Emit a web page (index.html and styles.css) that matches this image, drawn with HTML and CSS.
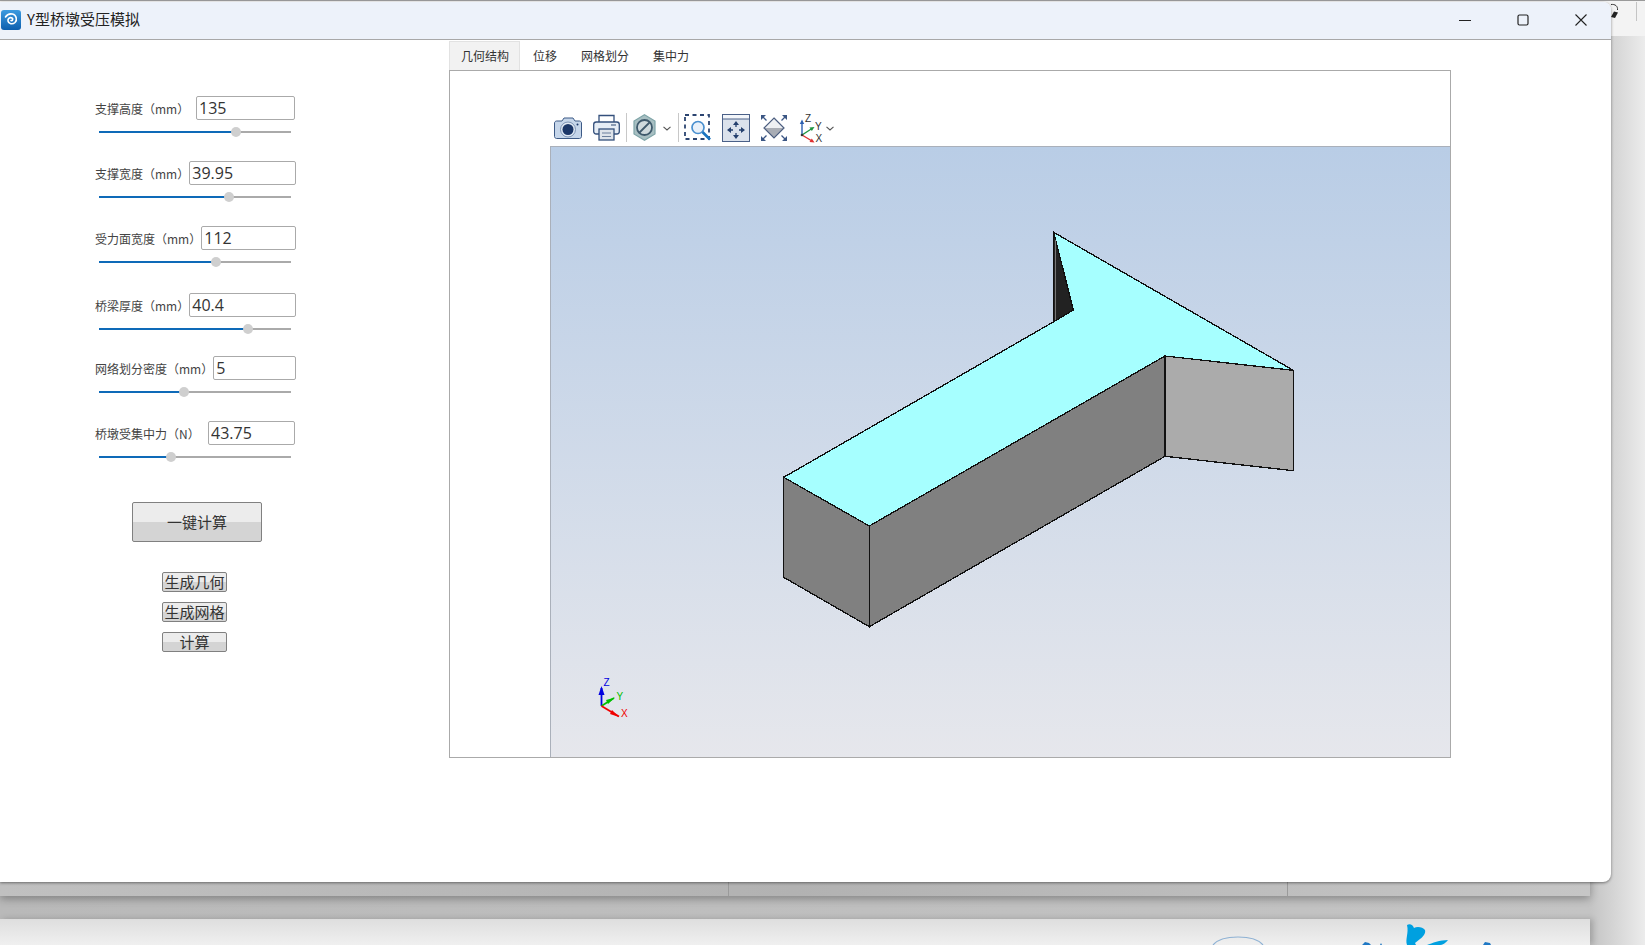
FILE: index.html
```html
<!DOCTYPE html>
<html lang="zh">
<head>
<meta charset="utf-8">
<title>Y型桥墩受压模拟</title>
<link rel="stylesheet" href="styles.css">
</head>
<body>
<div class="desktop">
  <div class="back-top"><span class="back-tick"></span></div>
  <svg class="back-cursor" width="10" height="16" viewBox="0 0 10 16"><path d="M1 1.500C5 1 8 3 7.500 7" fill="none" stroke="#333" stroke-width="1"/><path d="M4 8.500L8 9.500L5 15L1 14Z" fill="#222"/></svg>
  <div class="back-strip"><span class="div-a"></span><span class="div-b"></span></div>
  <div class="back-doc">
    <svg class="doc-logo" width="300" height="26" viewBox="0 0 300 26">
      <path d="M1 26C6 20 15 18 26 18C37 18 46 20 51 26" fill="none" stroke="#8fb2d4" stroke-width="1.200"/>
      <path d="M195 6C198 4 201 6 202 9C205 7 211 8 213 11C214 14 211 18 208 20L203 24L204 26H195C193 20 197 14 195 6Z" fill="#00a0e0"/>
      <path d="M215 26C220 24 228 21 236 21C234 24 230 26 228 26Z" fill="#00a0e0"/>
      <path d="M150 26L153 23L157 24L159 26Z M168 26L169 24L170 26Z M271 26L273 23L278 24L279 26Z" fill="#1f78c4"/>
    </svg>
  </div>

  <div class="window">
    <header class="titlebar">
      <svg class="app-icon" width="20" height="20" viewBox="0 0 20 20">
        <defs><linearGradient id="appg" x1="0" y1="0" x2="0" y2="1"><stop offset="0" stop-color="#3c9be0"/><stop offset="1" stop-color="#0d5fae"/></linearGradient></defs>
        <rect width="20" height="20" rx="3" fill="url(#appg)"/>
        <path d="M10 10.500C11.500 11 12.500 9 11 8C9 6.800 6.500 8.500 7 11C7.500 13.800 11.500 14.800 14 12.500C16.500 10 15.500 5 11.500 4C9 3.500 6 4.500 4.500 7" fill="none" stroke="#fff" stroke-width="1.600" stroke-linecap="round"/>
      </svg>
      <span class="title-text">Y型桥墩受压模拟</span>
      <div class="win-controls">
        <svg width="12" height="12" viewBox="0 0 12 12"><path d="M0 6.500H12" stroke="#222" stroke-width="1"/></svg>
        <svg width="12" height="12" viewBox="0 0 12 12"><rect x="1" y="1" width="10" height="10" rx="1.500" fill="none" stroke="#222" stroke-width="1.200"/></svg>
        <svg width="12" height="12" viewBox="0 0 12 12"><path d="M0.500 0.500L11.500 11.500M11.500 0.500L0.500 11.500" stroke="#222" stroke-width="1.100"/></svg>
      </div>
    </header>

    <div class="content">
      <aside class="sidebar">
        <div class="field">
          <div class="field-head"><label class="field-label">支撑高度（mm）</label><input class="num w99" value="135"></div>
          <div class="track"><div class="fill" style="width:137px"><span class="thumb"></span></div></div>
        </div>
        <div class="field">
          <div class="field-head"><label class="field-label">支撑宽度（mm）</label><input class="num w107" value="39.95"></div>
          <div class="track"><div class="fill" style="width:130px"><span class="thumb"></span></div></div>
        </div>
        <div class="field field-tall">
          <div class="field-head"><label class="field-label">受力面宽度（mm）</label><input class="num w95" value="112"></div>
          <div class="track"><div class="fill" style="width:117px"><span class="thumb"></span></div></div>
        </div>
        <div class="field field-short">
          <div class="field-head"><label class="field-label">桥梁厚度（mm）</label><input class="num w107" value="40.4"></div>
          <div class="track"><div class="fill" style="width:149px"><span class="thumb"></span></div></div>
        </div>
        <div class="field">
          <div class="field-head"><label class="field-label">网络划分密度（mm）</label><input class="num w83" value="5"></div>
          <div class="track"><div class="fill" style="width:85px"><span class="thumb"></span></div></div>
        </div>
        <div class="field">
          <div class="field-head"><label class="field-label">桥墩受集中力（N）</label><input class="num w87" value="43.75"></div>
          <div class="track"><div class="fill" style="width:72px"><span class="thumb"></span></div></div>
        </div>
        <button class="btn btn-main">一键计算</button>
        <div class="small-btns">
          <button class="btn btn-small">生成几何</button>
          <button class="btn btn-small">生成网格</button>
          <button class="btn btn-small">计算</button>
        </div>
      </aside>

      <main class="main">
        <nav class="tabs">
          <span class="tab tab-active">几何结构</span>
          <span class="tab">位移</span>
          <span class="tab">网格划分</span>
          <span class="tab">集中力</span>
        </nav>
        <section class="panel">
          <div class="toolbar">
            <svg class="ti-camera" width="28" height="22" viewBox="0 0 28 22">
              <path d="M2.500 4H8L10 1H19L21 4H25.500C26.500 4 27.500 5 27.500 6V19.500C27.500 20.500 26.500 21.500 25.500 21.500H2.500C1.500 21.500 .5 20.500 .5 19.500V6C.5 5 1.500 4 2.500 4Z" fill="#c6d6ea" stroke="#3d5a86" stroke-width="1"/>
              <circle cx="14" cy="12.500" r="7.500" fill="#dfe8f3" stroke="#7d93b4" stroke-width="1"/>
              <circle cx="14" cy="12.500" r="5.500" fill="#1c3768"/>
              <circle cx="23.500" cy="7.500" r="1" fill="#1c3768"/>
            </svg>
            <svg class="ti-printer" width="27" height="27" viewBox="0 0 27 27">
              <path d="M6 9V1.500H21V9" fill="#fff" stroke="#34507c" stroke-width="1.300"/>
              <rect x=".7" y="8" width="25.600" height="12" rx="2.500" fill="#e6edf5" stroke="#34507c" stroke-width="1.300"/>
              <path d="M18 11H23" stroke="#6b7f9c" stroke-width="1.500"/>
              <rect x="6" y="15" width="15" height="11" fill="#dde3ea" stroke="#34507c" stroke-width="1.300"/>
              <path d="M9 19H18M9 22.500H18" stroke="#6b7f9c" stroke-width="1.200"/>
            </svg>
            <span class="sep"></span>
            <svg class="ti-hex" width="23" height="27" viewBox="0 0 23 27">
              <path d="M11.500 .8L22 7V20L11.500 26.200L1 20V7Z" fill="#a8bfc2" stroke="#7fa5a8" stroke-width="1.200"/>
              <circle cx="11.500" cy="13.500" r="7.500" fill="#cfdadd" stroke="#3f5a6c" stroke-width="1.800"/>
              <path d="M6.500 18.500L16.500 8.500" stroke="#3f5a6c" stroke-width="1.800"/>
            </svg>
            <svg class="chev ti-chev1" width="8" height="5" viewBox="0 0 8 5"><path d="M.5 .8L4 4L7.500 .8" fill="none" stroke="#555" stroke-width="1.100"/></svg>
            <span class="sep sep2"></span>
            <svg class="ti-zoom" width="27" height="27" viewBox="0 0 27 27">
              <rect x="1" y="1" width="24" height="24" fill="none" stroke="#2b4470" stroke-width="1.800" stroke-dasharray="4 3.500"/>
              <circle cx="14" cy="13.500" r="6" fill="#e9f1fa" stroke="#4a90d0" stroke-width="1.700"/>
              <path d="M18.500 18L26 25.500" stroke="#1a74c0" stroke-width="2.600"/>
            </svg>
            <svg class="ti-pan" width="28" height="28" viewBox="0 0 28 28">
              <rect x=".5" y=".5" width="27" height="27" fill="#dbe2ec" stroke="#4a6088"/>
              <rect x="1" y="1" width="26" height="4" fill="#f3f6fa"/>
              <path d="M1 5H27" stroke="#4a6088"/>
              <path d="M14 10V13M14 19V22M8 16H11M17 16H20" stroke="#25406e" stroke-width="1.300"/>
              <path d="M14 7L11 11H17ZM14 25L11 21H17ZM5 16L9 13V19ZM23 16L19 13V19Z" fill="#25406e"/>
            </svg>
            <svg class="ti-fit" width="28" height="28" viewBox="0 0 28 28">
              <path d="M14 4L24 14L14 24L4 14Z" fill="#a9adb5"/>
              <path d="M14 4L24 14H4Z" fill="#eef0f3"/>
              <path d="M14 4L24 14L14 24L4 14Z" fill="none" stroke="#4d5f80" stroke-width="1.200"/>
              <path d="M1 1H6L1 6ZM27 1H22L27 6ZM1 27H6L1 22ZM27 27H22L27 22Z" fill="#3b5684"/>
              <path d="M2 2L6.500 6.500M26 2L21.500 6.500M2 26L6.500 21.500M26 26L21.500 21.500" stroke="#3b5684" stroke-width="1.300"/>
            </svg>
            <svg class="ti-triad" width="24" height="32" viewBox="0 -4 24 32">
              <path d="M3 19V6" stroke="#2b5fb0" stroke-width="1.400"/><path d="M3 3.500L.8 8H5.200Z" fill="#2b5fb0"/>
              <path d="M3 19L13 12.500" stroke="#1f9440" stroke-width="1.400"/><path d="M15.500 11L10.500 11.500L12.800 15Z" fill="#1f9440"/>
              <path d="M3 19L13 25" stroke="#e03030" stroke-width="1.400"/><path d="M15.500 26.500L10.500 26L12.800 22.500Z" fill="#e03030"/>
              <circle cx="3" cy="19" r="1.300" fill="#333"/>
              <text class="triad-txt" x="6" y="6">Z</text><text class="triad-txt" x="16" y="14">Y</text><text class="triad-txt" x="16.500" y="26">X</text>
            </svg>
            <svg class="chev ti-chev2" width="8" height="5" viewBox="0 0 8 5"><path d="M.5 .8L4 4L7.500 .8" fill="none" stroke="#555" stroke-width="1.100"/></svg>
          </div>
          <div class="viewport">
            <svg class="scene" width="899" height="610" viewBox="551 147 899 610" shape-rendering="crispEdges">
              <g stroke="#111" stroke-width="1.300" stroke-linejoin="miter">
                <path d="M1053.700 232.300L1073.300 310L1053.700 321.700Z" fill="#222"/>
                <path d="M1053.700 232.300L1293.300 370.300L1165 356L869.300 526L783.700 477.300L1053.700 321.700L1073.300 310Z" fill="#a6ffff"/>
                <path d="M869.300 526L1165 356V456.300L869.300 626.700Z" fill="#808080"/>
                <path d="M783.700 477.300L869.300 526V626.700L783.700 577.300Z" fill="#808080"/>
                <path d="M1165 356L1293.300 370.300V470.700L1165 456.300Z" fill="#ababab"/>
              </g>
              <path d="M1055.500 240V320" stroke="#777" stroke-width="1"/>
              <g shape-rendering="auto">
                <path d="M601.500 706V688" stroke="#0000e0" stroke-width="1.800"/><path d="M598.500 695H604.500L601.500 686Z" fill="#0000e0"/>
                <path d="M601.500 706L614 698" stroke="#00c000" stroke-width="1.600"/><path d="M608 704L606 700L615 697.500Z" fill="#00c000"/>
                <path d="M601.500 706L619 716.500" stroke="#f00000" stroke-width="1.800"/><path d="M612 710L610 714L619 717Z" fill="#f00000"/>
                <text class="axis axis-z" x="603.500" y="686">Z</text>
                <text class="axis axis-y" x="616.500" y="700">Y</text>
                <text class="axis axis-x" x="621" y="717">X</text>
              </g>
            </svg>
          </div>
        </section>
      </main>
    </div>
  </div>
</div>
</body>
</html>
```

FILE: styles.css
```css
* { box-sizing: border-box; }

html, body {
  margin: 0;
  padding: 0;
  width: 100%;
  height: 100%;
  overflow: hidden;
}

body {
  font-family: "Noto Sans CJK SC", "Noto Sans", sans-serif;
  color: #333;
}

.desktop {
  position: relative;
  width: 1645px;
  height: 945px;
  overflow: hidden;
  background: linear-gradient(90deg, #b9b9b9 0, #c4c4c4 1590px, #d2d2d2 1610px, #ececec 1645px);
}

.back-top {
  position: absolute;
  left: 0;
  top: 0;
  width: 1645px;
  height: 36px;
  background: #f3f3f3;
  border-top: 1px solid #9a9a9a;
}

.back-tick {
  position: absolute;
  left: 1636px;
  top: 1px;
  width: 1px;
  height: 19px;
  background: #c4c4c4;
}

.back-cursor {
  position: absolute;
  left: 1610px;
  top: 3px;
}

.back-strip {
  position: absolute;
  left: 0;
  top: 870px;
  width: 1590px;
  height: 26px;
  background: linear-gradient(90deg, #c0c0c0, #b2b2b2 50%, #c6c6c6);
  box-shadow: 0 3px 8px rgba(0, 0, 0, .3);
}

.div-a, .div-b {
  position: absolute;
  top: 0;
  width: 1px;
  height: 26px;
  background: #9a9a9a;
}
.div-a { left: 728px; }
.div-b { left: 1287px; }

.back-doc {
  position: absolute;
  left: 0;
  top: 919px;
  width: 1590px;
  height: 26px;
  background: linear-gradient(180deg, #dedede, #f0f0f0);
  box-shadow: 3px 0 6px rgba(0, 0, 0, .18);
}

.doc-logo {
  position: absolute;
  left: 1212px;
  top: 0;
}

.window {
  position: absolute;
  left: 0;
  top: 2px;
  width: 1611px;
  height: 880px;
  display: flex;
  flex-direction: column;
  background: #fff;
  border-radius: 0 8px 8px 0;
  box-shadow: 0 1px 3px rgba(0, 0, 0, .45);
  overflow: hidden;
}

.titlebar {
  display: flex;
  align-items: center;
  height: 38px;
  flex: none;
  padding: 0 0 2px 1px;
  background: #edf2fa;
  border-bottom: 1px solid #a8a8a8;
}

.app-icon { flex: none; }

.title-text {
  margin-left: 6px;
  padding-bottom: 2px;
  font-size: 15px;
  line-height: 20px;
  color: #222;
}

.win-controls {
  display: flex;
  gap: 46px;
  align-items: center;
  margin-left: auto;
  padding-right: 24px;
}

.content {
  display: flex;
  flex: 1;
}

.sidebar {
  flex: none;
  width: 449px;
  padding: 56px 0 0 95px;
}

.field {
  width: 200px;
  margin-bottom: 28px;
}
.field-tall { margin-bottom: 30px; }
.field-short { margin-bottom: 26px; }

.field-head {
  display: flex;
  justify-content: space-between;
  align-items: center;
  height: 24px;
}

.field-label {
  padding-top: 1px;
  font-size: 12px;
  line-height: 24px;
  color: #444;
  white-space: nowrap;
}

.num {
  height: 24px;
  padding: 0 2px;
  font-family: "Open Sans", sans-serif;
  font-size: 16px;
  color: #333;
  background: #fff;
  border: 1px solid #aaa;
  border-radius: 2px;
  outline: none;
}
.w99 { width: 99px; }
.w107 { width: 107px; }
.w95 { width: 95px; }
.w83 { width: 83px; }
.w87 { width: 87px; }

.track {
  width: 192px;
  height: 2px;
  margin: 11px 0 0 4px;
  background: #aaa;
}

.fill {
  position: relative;
  height: 2px;
  background: #0e6ab8;
}

.thumb {
  position: absolute;
  right: -5px;
  top: -4px;
  width: 10px;
  height: 10px;
  border-radius: 50%;
  background: #cfcfcf;
}

.btn {
  display: block;
  padding: 0;
  font-family: "Noto Sans CJK SC", sans-serif;
  color: #333;
  border: 1px solid #808080;
  border-radius: 2px;
  background: linear-gradient(180deg, #ececec 50%, #d4d4d4 50%);
}

.btn-main {
  width: 130px;
  height: 40px;
  margin: 44px 0 0 37px;
  padding-bottom: 2px;
  font-size: 15px;
}

.small-btns {
  display: flex;
  flex-direction: column;
  gap: 10px;
  margin: 30px 0 0 67px;
}

.btn-small {
  width: 65px;
  height: 20px;
  font-size: 15px;
  line-height: 16px;
}

.main {
  flex: none;
  width: 1002px;
  padding-top: 1px;
}

.tabs {
  display: flex;
  height: 29px;
  font-size: 12px;
}

.tab {
  padding: 0 12px;
  line-height: 29px;
  color: #333;
}

.tab-active {
  width: 71px;
  margin-right: 1px;
  padding: 0 0 0 11px;
  line-height: 27px;
  background: #f2f2f2;
  border: 1px solid #e2e2e2;
  border-bottom: 0;
}

.panel {
  height: 688px;
  padding-left: 100px;
  background: #fff;
  border: 1px solid #aaa;
}

.toolbar {
  position: relative;
  display: flex;
  align-items: center;
  height: 75px;
  padding: 38px 0 0 4px;
}

.ti-printer { margin-left: 11px; }
.sep {
  flex: none;
  width: 1px;
  height: 29px;
  margin-left: 6px;
  background: #c8c8c8;
}
.ti-hex { margin-left: 6px; }
.chev { flex: none; margin-top: 2px; }
.ti-chev1 { margin-left: 7px; }
.sep2 { margin-left: 7px; }
.ti-zoom { margin-left: 5px; }
.ti-pan { margin-left: 11px; }
.ti-fit { margin-left: 10px; }
.ti-triad { margin-left: 11px; }
.ti-chev2 { margin-left: 3px; }

.triad-txt {
  font-family: "Liberation Sans", sans-serif;
  font-size: 10px;
  fill: #333;
}

.viewport {
  width: 900px;
  height: 611px;
  background: linear-gradient(180deg, #b9cde6 0%, #e6e7ec 100%);
  border-top: 1px solid #aab0ba;
  border-left: 1px solid #aab0ba;
}

.scene { display: block; }

.axis {
  font-family: "Liberation Sans", sans-serif;
  font-size: 10px;
}
.axis-z { fill: #0000e0; }
.axis-y { fill: #00c000; }
.axis-x { fill: #f00000; }
```
